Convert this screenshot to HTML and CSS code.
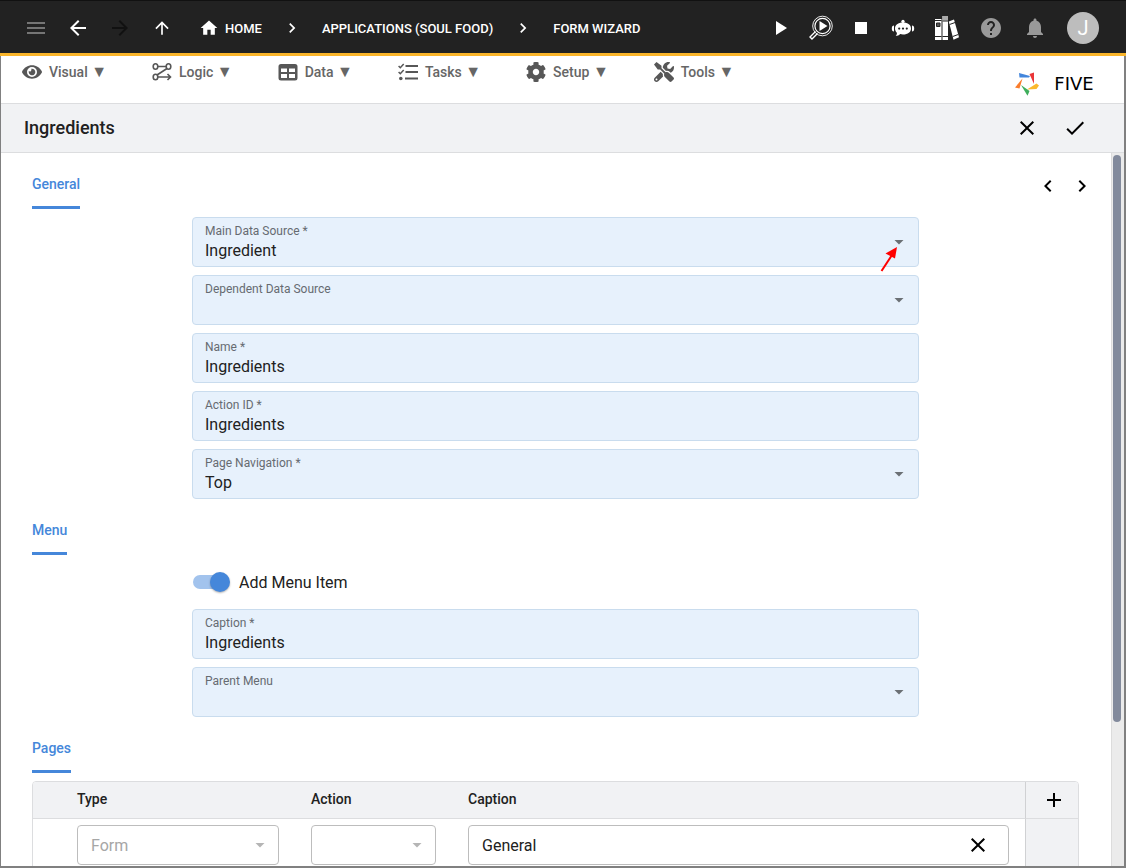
FILE: index.html
```
<!DOCTYPE html>
<html lang="en">

	<head>
		<meta charset="utf-8" />
		<title>Five - Form Wizard</title>
		<link rel="stylesheet" href="styles.css">
	</head>

	<body>
		<header class="topbar">
			<button class="icon-btn dim" aria-label="Menu"><svg class="icon" viewBox="0 0 24 24"><path d="M3 18h18v-2H3v2zm0-5h18v-2H3v2zm0-7v2h18V6H3z"/></svg></button>
			<button class="icon-btn" aria-label="Back"><svg class="icon" viewBox="0 0 24 24"><path d="M20 11H7.83l5.59-5.59L12 4l-8 8 8 8 1.41-1.41L7.83 13H20v-2z"/></svg></button>
			<button class="icon-btn off" aria-label="Forward" disabled><svg class="icon" viewBox="0 0 24 24"><path d="M12 4l-1.41 1.41L16.17 11H4v2h12.17l-5.58 5.59L12 20l8-8z"/></svg></button>
			<button class="icon-btn" aria-label="Up"><svg class="icon small" viewBox="0 0 24 24"><path d="M4 12l1.41 1.41L11 7.83V20h2V7.83l5.58 5.59L20 12l-8-8-8 8z"/></svg></button>
			<nav class="crumbs" aria-label="Breadcrumb">
				<a href="#"><svg class="icon small" viewBox="0 0 24 24"><path d="M10 20v-6h4v6h5v-8h3L12 3 2 12h3v8z"/></svg>HOME</a>
				<svg class="icon small" viewBox="0 0 24 24"><path d="M10 6L8.590 7.410 13.170 12l-4.580 4.590L10 18l6-6z"/></svg>
				<a href="#">APPLICATIONS (SOUL FOOD)</a>
				<svg class="icon small" viewBox="0 0 24 24"><path d="M10 6L8.590 7.410 13.170 12l-4.580 4.590L10 18l6-6z"/></svg>
				<a href="#">FORM WIZARD</a>
			</nav>
			<div class="actions">
				<button class="icon-btn" aria-label="Run"><svg class="icon" viewBox="0 0 24 24"><path d="M7 5v14l11-7z"/></svg></button>
				<button class="icon-btn" aria-label="Inspect">
					<svg class="icon" viewBox="0 0 24 24">
						<g fill="none" stroke="#fff">
							<circle cx="13.500" cy="10" r="9.800" stroke-width=".9"/>
							<circle cx="13.500" cy="10" r="7.600" stroke-width="1.200"/>
							<path d="M6.500 15.500L1 21l2 2 5.500-5.500" stroke-width="1.400"/>
						</g>
						<path d="M10.500 5v10l8-5z"/>
					</svg>
				</button>
				<button class="icon-btn" aria-label="Stop"><svg class="icon" viewBox="0 0 24 24"><path d="M6 6h12v12H6z"/></svg></button>
				<button class="icon-btn wide" aria-label="Assistant">
					<svg class="icon" viewBox="0 0 24 24">
						<circle cx="12" cy="5.300" r="1.600"/>
						<path d="M11.300 5h1.400v3h-1.400z"/>
						<path d="M12 6.500c5 0 8 2.500 8 6s-3 6-8 6c-1 0-2-.1-2.900-.4C8 19.500 6.200 20 4.700 20c.9-.9 1.300-2 1.200-3.200C4.700 15.700 4 14.200 4 12.500c0-3.500 3-6 8-6z"/>
						<path d="M3 9.500v6c-1.500 0-2.200-1-2.200-3s.7-3 2.200-3zM21 9.500v6c1.500 0 2.200-1 2.200-3s-.7-3-2.200-3z"/>
						<g fill="#222"><circle cx="8.200" cy="12.600" r="1.100"/><circle cx="12" cy="12.600" r="1.100"/><circle cx="15.800" cy="12.600" r="1.100"/></g>
					</svg>
				</button>
				<button class="icon-btn wide" aria-label="Library">
					<svg class="icon" viewBox="0 0 24 24">
						<path d="M0 3h6.500v21H0z"/>
						<path d="M7.500 0h5.500v24H7.500z"/>
						<path d="M7.500 0H13v4.500H7.500z" fill="#aaa"/>
						<path d="M13.800 5.500l5.200-1.900 5 17.600-5.500 2.500z"/>
						<path d="M1.500 7h3.500v3.500H1.500z" stroke="#222" fill="#555"/>
						<path d="M0 4.500h6.500M0 20.500h6.500M7.500 5h5.500M7.500 20.500h5.500M14.500 8.500l5.600-2M17.700 20.500l5.500-2" stroke="#222" fill="none"/>
					</svg>
				</button>
				<button class="icon-btn wide soft" aria-label="Help"><svg class="icon" viewBox="0 0 24 24"><path d="M12 2C6.480 2 2 6.480 2 12s4.480 10 10 10 10-4.480 10-10S17.520 2 12 2zm1 17h-2v-2h2v2zm2.070-7.750l-.9.920C13.450 12.900 13 13.500 13 15h-2v-.5c0-1.100.45-2.100 1.170-2.830l1.240-1.260c.37-.36.59-.86.59-1.410 0-1.100-.9-2-2-2s-2 .9-2 2H8c0-2.210 1.790-4 4-4s4 1.790 4 4c0 .88-.36 1.680-.93 2.250z"/></svg></button>
				<button class="icon-btn wide soft" aria-label="Notifications"><svg class="icon" viewBox="0 0 24 24"><path d="M12 22c1.100 0 2-.9 2-2h-4c0 1.100.89 2 2 2zm6-6v-5c0-3.070-1.640-5.640-4.500-6.320V4c0-.83-.67-1.500-1.500-1.500s-1.500.67-1.500 1.500v.68C7.630 5.360 6 7.920 6 11v5l-2 2v1h16v-1l-2-2z"/></svg></button>
				<button class="avatar" aria-label="Account">J</button>
			</div>
		</header>

		<div class="frame">
			<div class="navbar">
				<nav class="menu" aria-label="Main">
					<button>
						<svg class="icon small" viewBox="0 0 576 512"><path d="M572.520 241.400C518.290 135.590 410.930 64 288 64S57.680 135.640 3.480 241.410a32.350 32.350 0 0 0 0 29.190C57.710 376.410 165.070 448 288 448s230.320-71.640 284.520-177.410a32.350 32.350 0 0 0 0-29.190zM288 400a144 144 0 1 1 144-144 143.930 143.930 0 0 1-144 144zm0-240a95.310 95.310 0 0 0-25.310 3.790 47.850 47.850 0 0 1-66.900 66.900A95.780 95.780 0 1 0 288 160z"/></svg>
						<span>Visual <i>▼</i></span>
					</button>
					<button>
						<svg class="icon small" viewBox="0 0 20 20">
							<g fill="none" stroke="#575757" stroke-width="1.600">
								<ellipse cx="3.500" cy="4.500" rx="2.300" ry="2.700"/>
								<ellipse cx="16.500" cy="4.500" rx="2.300" ry="2.700"/>
								<ellipse cx="3.500" cy="15" rx="2.300" ry="2.700"/>
								<path d="M6 4.500h8M15 6.500L5 13M6 15h12M15.500 12l3 3-3 3"/>
							</g>
						</svg>
						<span>Logic <i>▼</i></span>
					</button>
					<button>
						<svg class="icon small" viewBox="0 0 20 20"><path fill-rule="evenodd" d="M3 2h14a2.500 2.500 0 0 1 2.500 2.500v11.500a2.500 2.500 0 0 1-2.500 2.500H3A2.500 2.500 0 0 1 .5 16V4.500A2.500 2.500 0 0 1 3 2zM3 6.500v3.500h6V6.500zm8 0v3.500h6V6.500zm-8 5.500v4h6v-4zm8 0v4h6v-4z"/></svg>
						<span>Data <i>▼</i></span>
					</button>
					<button>
						<svg class="icon small" viewBox="0 0 20 20">
							<path d="M7.500 3H20v2H7.500zM7.500 9H20v2H7.500zM7 15.500h13v2H7z"/>
							<circle cx="2.800" cy="16.500" r="1.800"/>
							<path d="M.6 4l1.700 1.700L5.700 2M.6 10l1.700 1.700L5.700 8" fill="none" stroke="#575757" stroke-width="1.500"/>
						</svg>
						<span>Tasks <i>▼</i></span>
					</button>
					<button>
						<svg class="icon small" viewBox="10 8 492 496"><path d="M487.400 315.700l-42.600-24.600c4.300-23.200 4.300-47 0-70.200l42.600-24.600c4.900-2.800 7.100-8.600 5.500-14-11.100-35.600-30-67.800-54.700-94.600-3.800-4.100-10-5.100-14.800-2.300L380.800 110c-17.900-15.400-38.500-27.300-60.800-35.100V25.800c0-5.600-3.900-10.500-9.400-11.700-36.700-8.200-74.300-7.800-109.200 0-5.500 1.200-9.400 6.100-9.400 11.700V75c-22.200 7.900-42.800 19.800-60.800 35.100L88.700 85.500c-4.900-2.800-11-1.900-14.800 2.300-24.700 26.700-43.600 58.900-54.700 94.600-1.700 5.400.6 11.200 5.500 14L67.300 221c-4.300 23.200-4.300 47 0 70.200l-42.600 24.600c-4.900 2.800-7.100 8.600-5.500 14 11.100 35.600 30 67.800 54.700 94.600 3.800 4.100 10 5.100 14.800 2.300l42.600-24.600c17.900 15.400 38.500 27.300 60.800 35.100v49.200c0 5.600 3.900 10.500 9.400 11.700 36.700 8.200 74.300 7.800 109.200 0 5.500-1.200 9.400-6.100 9.400-11.700v-49.200c22.200-7.900 42.800-19.800 60.800-35.100l42.600 24.600c4.900 2.800 11 1.900 14.800-2.300 24.700-26.700 43.600-58.900 54.700-94.600 1.500-5.500-.7-11.300-5.600-14.100zM256 336c-44.100 0-80-35.900-80-80s35.900-80 80-80 80 35.900 80 80-35.900 80-80 80z"/></svg>
						<span>Setup <i>▼</i></span>
					</button>
					<button>
						<svg class="icon small" viewBox="0 0 512 512"><path d="M501.100 395.700L384 278.600c-23.100-23.100-57.600-27.600-85.400-13.900L192 158.100V96L64 0 0 64l96 128h62.100l106.600 106.600c-13.600 27.800-9.200 62.300 13.900 85.400l117.100 117.100c14.600 14.600 38.200 14.600 52.700 0l52.700-52.700c14.500-14.600 14.500-38.200 0-52.700zM331.700 225c28.300 0 54.900 11 74.900 31l19.400 19.400c15.800-6.900 30.800-16.500 43.800-29.500 37.100-37.100 49.700-89.300 37.900-136.700-2.200-9-13.500-12.100-20.100-5.500l-74.400 74.400-67.900-11.300L334 98.900l74.400-74.400c6.600-6.600 3.400-17.900-5.700-20.200-47.400-11.700-99.600.9-136.600 37.900-28.500 28.500-41.900 66.100-41.200 103.600l82.100 82.100c8.100-1.900 16.500-2.900 24.700-2.900zm-103.900 82l-56.700-56.700L18.700 402.800c-25 25-25 65.500 0 90.500s65.500 25 90.500 0l123.600-123.600c-7.600-19.900-9.900-41.600-5-62.700zM64 472c-13.200 0-24-10.800-24-24 0-13.300 10.700-24 24-24s24 10.700 24 24c0 13.200-10.700 24-24 24z"/></svg>
						<span>Tools <i>▼</i></span>
					</button>
				</nav>
				<a class="logo" href="#">
					<svg class="icon" viewBox="0 0 24 24">
						<path d="M4 1l11 3-1 1.500H4.500z" fill="#4285dc"/>
						<path d="M19 .5v11.500L14.500 2z" fill="#ea3538"/>
						<path d="M24 13.500l-2.500 3.500L12 17.500l9.500-6z" fill="#fbb92d"/>
						<path d="M6 13l8.500 6-2 4.800z" fill="#3fae5c"/>
						<path d="M7.500 6.500L4.500 16.500 0 15.500z" fill="#fa7d2c"/>
					</svg>
					<span>FIVE</span>
				</a>
			</div>

			<div class="titlebar">
				<h1>Ingredients</h1>
				<button class="icon-btn" aria-label="Cancel"><svg class="icon" viewBox="0 0 24 24"><path d="M19 6.410L17.590 5 12 10.590 6.410 5 5 6.410 10.590 12 5 17.590 6.410 19 12 13.410 17.590 19 19 17.590 13.410 12z"/></svg></button>
				<button class="icon-btn" aria-label="Save"><svg class="icon" viewBox="0 0 24 24"><path d="M9 16.170L4.830 12l-1.420 1.410L9 19 21 7l-1.410-1.410z"/></svg></button>
			</div>

			<div class="body">
				<main class="content">
					<div class="section-head">
						<h2>General</h2>
						<div class="pager">
							<button class="icon-btn" aria-label="Previous"><svg class="icon" viewBox="0 0 24 24"><path d="M15.410 7.410L14 6l-6 6 6 6 1.410-1.410L10.830 12z"/></svg></button>
							<button class="icon-btn" aria-label="Next"><svg class="icon" viewBox="0 0 24 24"><path d="M10 6L8.590 7.410 13.170 12l-4.580 4.590L10 18l6-6z"/></svg></button>
						</div>
					</div>
					<div class="fields">
						<div class="field">
							<label for="mainSource">Main Data Source *</label>
							<select id="mainSource"><option>Ingredient</option></select>
							<span class="caret"></span>
							<svg class="pointer" viewBox="0 0 18 26"><path d="M1.500 25L12 9" stroke="#f00" stroke-width="2"/><path d="M17 1L5.500 7.500l9.500 5z" fill="#f00"/></svg>
						</div>
						<div class="field">
							<label for="depSource">Dependent Data Source</label>
							<select id="depSource"><option></option></select>
							<span class="caret"></span>
						</div>
						<div class="field">
							<label for="name">Name *</label>
							<input id="name" type="text" value="Ingredients">
						</div>
						<div class="field">
							<label for="actionId">Action ID *</label>
							<input id="actionId" type="text" value="Ingredients">
						</div>
						<div class="field">
							<label for="pageNav">Page Navigation *</label>
							<select id="pageNav"><option>Top</option></select>
							<span class="caret"></span>
						</div>
					</div>

					<div class="section-head">
						<h2>Menu</h2>
					</div>
					<div class="fields">
						<label class="switch"><input type="checkbox" checked>Add Menu Item</label>
						<div class="field">
							<label for="caption">Caption *</label>
							<input id="caption" type="text" value="Ingredients">
						</div>
						<div class="field">
							<label for="parentMenu">Parent Menu</label>
							<select id="parentMenu"><option></option></select>
							<span class="caret"></span>
						</div>
					</div>

					<div class="section-head">
						<h2>Pages</h2>
					</div>
					<div class="grid">
						<table>
							<colgroup>
								<col class="col-lead">
								<col class="col-type">
								<col class="col-action">
								<col>
								<col class="col-add">
							</colgroup>
							<thead>
								<tr>
									<th></th>
									<th>Type</th>
									<th>Action</th>
									<th>Caption</th>
									<th class="add"><button class="icon-btn" aria-label="Add page"><svg class="icon" viewBox="0 0 24 24"><path d="M19 13h-6v6h-2v-6H5v-2h6V5h2v6h6v2z"/></svg></button></th>
								</tr>
							</thead>
							<tbody>
								<tr>
									<td></td>
									<td><div class="cell disabled"><select aria-label="Type" disabled><option>Form</option></select><span class="caret"></span></div></td>
									<td><div class="cell disabled"><select aria-label="Action" disabled><option></option></select><span class="caret"></span></div></td>
									<td><div class="cell"><input type="text" aria-label="Caption" value="General"><button class="icon-btn" aria-label="Clear"><svg class="icon" viewBox="0 0 24 24"><path d="M19 6.410L17.590 5 12 10.590 6.410 5 5 6.410 10.590 12 5 17.590 6.410 19 12 13.410 17.590 19 19 17.590 13.410 12z"/></svg></button></div></td>
									<td class="add"></td>
								</tr>
							</tbody>
						</table>
					</div>
				</main>
				<div class="scrollbar"><div class="thumb"></div></div>
			</div>
		</div>
	</body>

</html>
```
FILE: styles.css
```
* {
	box-sizing: border-box;
}

body {
	display: flex;
	flex-direction: column;
	height: 100vh;
	margin: 0;
	overflow: hidden;
	color: #212121;
	font-family: Roboto, "Liberation Sans", sans-serif;
	font-size: 16px;
}

button,
input,
select {
	margin: 0;
	padding: 0;
	border: 0;
	background: none;
	color: inherit;
	font: inherit;
	outline: 0;
}

select {
	appearance: none;
	opacity: 1;
}

h1,
h2 {
	margin: 0;
	font-weight: 500;
}

a {
	color: inherit;
	text-decoration: none;
}

.icon {
	display: block;
	flex: none;
	width: 24px;
	height: 24px;
	fill: currentColor;
	overflow: visible;
}

.icon.small {
	width: 20px;
	height: 20px;
}

.icon-btn {
	display: flex;
	flex: none;
	align-items: center;
	justify-content: center;
	height: 40px;
}

/* top bar */
.topbar {
	display: flex;
	flex: none;
	align-items: center;
	height: 56px;
	padding: 2px 27px 0 15px;
	border-top: 1px solid #111;
	border-bottom: 3px solid #fab52a;
	background: #222;
	color: #fff;
}

.topbar > .icon-btn {
	width: 42px;
}

.topbar .dim {
	color: #757575;
}

.topbar .off {
	color: #111;
}

.topbar .soft {
	color: #999;
}

.crumbs {
	display: flex;
	flex: 1;
	align-items: center;
	gap: 20px;
	margin-left: 16px;
	font-size: 13px;
	font-weight: 500;
	white-space: nowrap;
}

.crumbs a {
	display: flex;
	align-items: center;
	gap: 6px;
}

.actions {
	display: flex;
	align-items: center;
}

.actions .icon-btn {
	width: 40px;
}

.actions .wide {
	width: 44px;
}

.avatar {
	width: 32px;
	height: 32px;
	margin-left: 10px;
	border-radius: 50%;
	background: #bdbdbd;
	font-size: 20px;
}

/* window frame below the top bar */
.frame {
	display: flex;
	flex: 1;
	flex-direction: column;
	min-height: 0;
	border: solid #808080;
	border-width: 0 2px 2px 1px;
}

.navbar {
	display: flex;
	flex: none;
	align-items: flex-start;
	justify-content: space-between;
	height: 48px;
	padding: 4px 21px 0;
	border-bottom: 1px solid #dcdddf;
}

.menu {
	display: flex;
	gap: 45px;
}

.menu button {
	display: flex;
	align-items: center;
	gap: 7px;
	height: 24px;
	color: #575757;
	font-size: 14px;
	font-weight: 500;
	line-height: 22px;
}

.menu span {
	color: #666;
}

.menu i {
	font-size: 16px;
	font-style: normal;
	line-height: 16px;
}

.logo {
	display: flex;
	align-items: center;
	gap: 6px;
	padding-top: 12px;
	color: #000;
	font-family: "DejaVu Sans", sans-serif;
	font-size: 18px;
	line-height: 24px;
}

.logo span {
	min-width: 58px;
	text-align: center;
}

.titlebar {
	display: flex;
	flex: none;
	align-items: center;
	height: 49px;
	padding: 0 25px 0 23px;
	border-bottom: 1px solid #dcdddf;
	background: #f1f2f4;
	color: #000;
}

.titlebar h1 {
	flex: 1;
	color: #212121;
	font-size: 18px;
	line-height: 24px;
}

.titlebar .icon-btn {
	width: 48px;
}

.body {
	display: flex;
	flex: 1;
	min-height: 0;
}

.content {
	display: flex;
	flex: 1;
	flex-direction: column;
	gap: 8px;
	min-width: 0;
	padding: 8px 32px 8px 31px;
	overflow: auto;
	scrollbar-width: none;
}

.scrollbar {
	width: 13px;
	padding: 2px 3px 2px 1px;
	border-left: 1px solid #dcdcdc;
	background: #ebebeb;
}

.thumb {
	height: 80%;
	border-radius: 4px;
	background: #828a9c;
}

/* form sections */
.section-head {
	display: flex;
	flex: none;
	justify-content: space-between;
	height: 48px;
}

.section-head h2 {
	border-bottom: 3px solid #4587da;
	color: #4587da;
	font-size: 14px;
	line-height: 46px;
}

.pager {
	display: flex;
	align-items: center;
	margin-right: -20px;
	padding-top: 2px;
	color: #000;
}

.pager .icon-btn {
	width: 34px;
}

.fields {
	display: flex;
	flex: none;
	flex-direction: column;
	gap: 8px;
	margin: 0 160px;
}

.field {
	display: grid;
	grid-template-rows: 16px 24px;
	grid-template-columns: 1fr 10px;
	position: relative;
	padding: 5px 14px 3px 12px;
	border: 1px solid #c9dcee;
	border-radius: 4px;
	background: #e7f1fc;
}

.field label {
	color: #666b71;
	font-size: 12px;
	line-height: 16px;
}

.field input,
.field select {
	grid-row: 2;
	min-width: 0;
	line-height: 24px;
}

.caret {
	width: 10px;
	height: 5px;
	background: #6b7075;
	clip-path: polygon(0 0, 100% 0, 50% 100%);
}

.field .caret {
	grid-row: 1 / 3;
	grid-column: 2;
	align-self: center;
	margin-bottom: 2px;
}

.pointer {
	position: absolute;
	top: 28px;
	right: 20px;
	width: 18px;
	height: 26px;
}

.switch {
	display: flex;
	align-items: center;
	gap: 12px;
	height: 38px;
	padding-left: 1px;
}

.switch input {
	position: relative;
	width: 34px;
	height: 14px;
	border-radius: 7px;
	background: #a2c3ed;
	appearance: none;
}

.switch input::before {
	content: "";
	position: absolute;
	top: -3px;
	left: -3px;
	width: 20px;
	height: 20px;
	border-radius: 50%;
	background: #fff;
	box-shadow: 0 1px 2px rgba(0, 0, 0, .3);
}

.switch input:checked::before {
	left: 17px;
	background: #4587da;
}

/* pages grid */
.grid {
	flex: none;
	overflow: hidden;
	border: 1px solid #dcdddf;
	border-radius: 4px;
}

table {
	width: 100%;
	table-layout: fixed;
	border-collapse: separate;
	border-spacing: 0;
}

.col-lead {
	width: 28px;
}

.col-type {
	width: 234px;
}

.col-action {
	width: 157px;
}

.col-add {
	width: 53px;
}

th {
	height: 37px;
	padding: 0 16px 2px;
	border-bottom: 1px solid #dcdddf;
	background: #f1f2f4;
	font-size: 14px;
	font-weight: 500;
	text-align: left;
}

td {
	padding: 6px 16px;
}

th.add,
td.add {
	padding: 0;
	border-left: 1px solid #d0d1d3;
	background: #f1f2f4;
}

.add .icon-btn {
	width: 100%;
	height: 36px;
	padding-left: 4px;
	color: #000;
}

.cell {
	display: flex;
	align-items: center;
	height: 40px;
	padding: 0 13px;
	border: 1px solid #bdbdbd;
	border-radius: 4px;
}

.cell input,
.cell select {
	flex: 1;
	min-width: 0;
}

.cell .icon-btn {
	width: 34px;
	color: #000;
}

.cell.disabled {
	color: #a6a6a6;
}

.cell.disabled .caret {
	background: #b5b5b5;
}
```
